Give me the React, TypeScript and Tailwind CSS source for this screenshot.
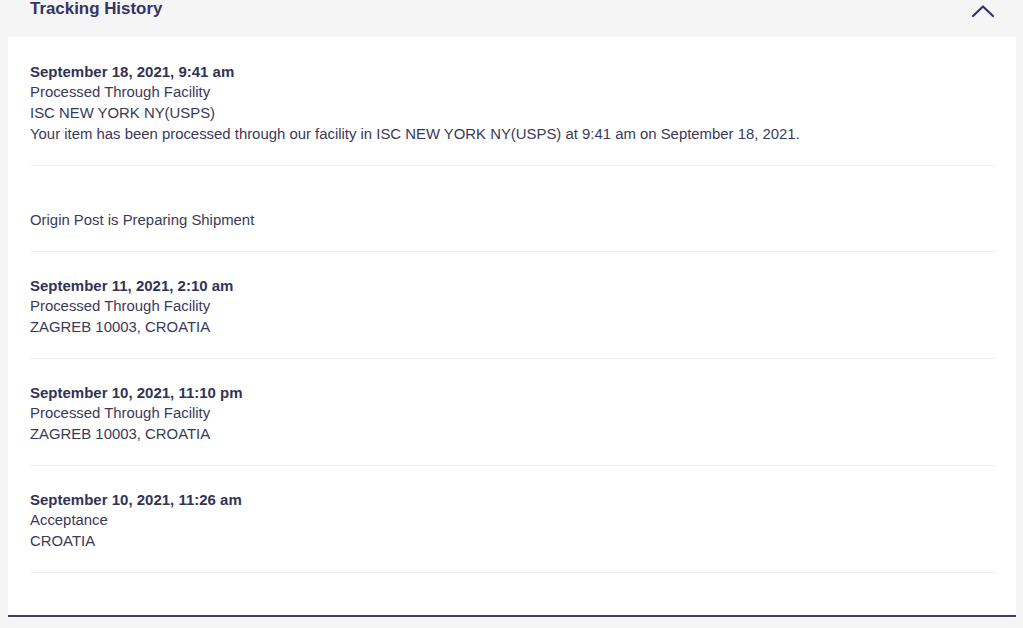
import React from 'react';

interface TrackingEvent {
  date?: string;
  status: string;
  location?: string;
  detail?: string;
}

const EVENTS: TrackingEvent[] = [
  {
    date: 'September 18, 2021, 9:41 am',
    status: 'Processed Through Facility',
    location: 'ISC NEW YORK NY(USPS)',
    detail: 'Your item has been processed through our facility in ISC NEW YORK NY(USPS) at 9:41 am on September 18, 2021.',
  },
  { status: 'Origin Post is Preparing Shipment' },
  { date: 'September 11, 2021, 2:10 am', status: 'Processed Through Facility', location: 'ZAGREB 10003, CROATIA' },
  { date: 'September 10, 2021, 11:10 pm', status: 'Processed Through Facility', location: 'ZAGREB 10003, CROATIA' },
  { date: 'September 10, 2021, 11:26 am', status: 'Acceptance', location: 'CROATIA' },
];

const ChevronUp = () => (
  <svg width="24" height="14" viewBox="0 0 24 14" fill="none">
    <path d="M2 12L12 2.5L22 12" stroke="#333366" strokeWidth="2.2" strokeLinecap="round" strokeLinejoin="round" />
  </svg>
);

const App: React.FC = () => {
  return (
    <div className="min-h-[628px] bg-[#f5f5f6] font-['Liberation_Sans',Arial,sans-serif] text-[#333366] overflow-hidden">
      <div className="flex items-start justify-between h-[37px] pl-[30px] pr-[28px]">
        <h2 className="text-[16.9px] font-bold leading-[18px]">Tracking History</h2>
        <div className="mt-[4px]"><ChevronUp /></div>
      </div>

      <div className="ml-[8px] mr-[7px] bg-white border-b-2 border-[#3d3d66] pb-[42px] pl-[22px] pr-[21px]">
        {EVENTS.map((ev, i) => (
          <div key={i} className={`${i === 0 ? 'pt-[24px]' : 'pt-[23px]'} pb-[20px] border-b border-[#f0f0f2] text-[14.9px] leading-[21px]`}>
            <p className="font-bold text-[#333355] text-[15px] leading-[21px] h-[21px]">{ev.date ?? ''}</p>
            <p className="text-[#3a3a58]">{ev.status}</p>
            {ev.location && <p className="text-[#3a3a58]">{ev.location}</p>}
            {ev.detail && <p className="text-[#3a3a58]">{ev.detail}</p>}
          </div>
        ))}
      </div>
    </div>
  );
};

export default App;
